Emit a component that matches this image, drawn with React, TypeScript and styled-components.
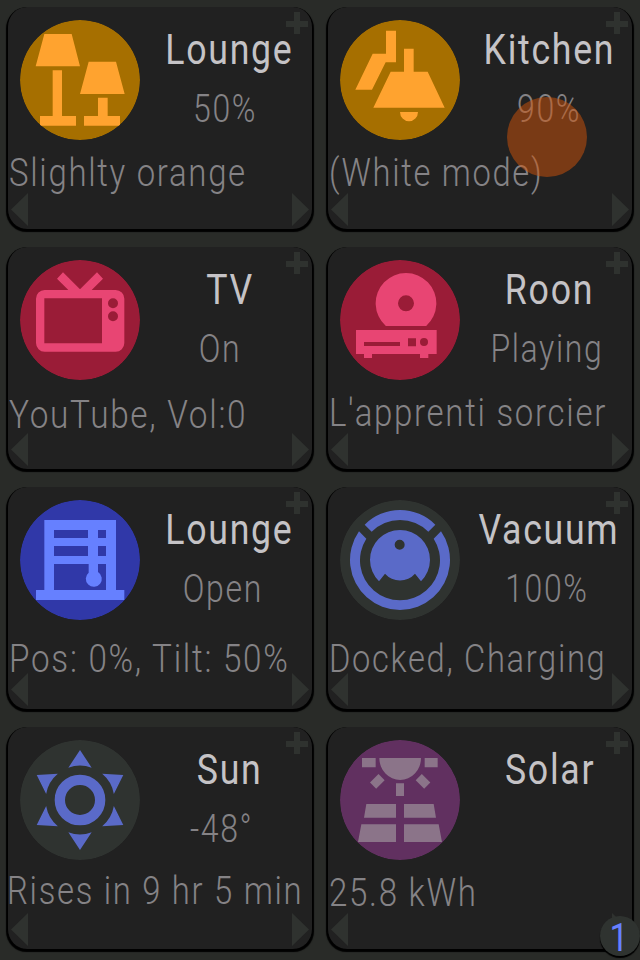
import React from "react";
import styled, { createGlobalStyle } from "styled-components";

const Global = createGlobalStyle`
  body { margin: 0; background: #292b28; overflow: hidden; }
`;

const Screen = styled.main`
  position: relative;
  width: 640px;
  height: 960px;
  display: grid;
  grid-template-columns: repeat(2, minmax(0, 1fr));
  grid-template-rows: repeat(4, minmax(0, 1fr));
  overflow: hidden;
  font-family: "Roboto", "Liberation Sans", sans-serif;
`;

const Card = styled.article`
  position: relative;
  box-sizing: border-box;
  margin: 7px 7px 11px 7px;
  padding: 13px 0 0 1px;
  border: 0 solid #000;
  border-width: 0 1px;
  border-radius: 20px;
  background: #212121;
  box-shadow: 0 2px 1px 0.5px #000;
`;

const Header = styled.div`
  display: flex;
  height: 120px;
  padding-left: 11px;
`;

const Disc = styled.svg`
  flex: none;
  width: 120px;
  height: 120px;
  border-radius: 50%;
`;

const Labels = styled.div`
  flex: none;
  width: 178px;
  display: flex;
  flex-direction: column;
  align-items: center;
`;

const Title = styled.h2<{ $shift?: number }>`
  margin: 5px 0 0;
  font-size: 42px;
  line-height: 50px;
  font-weight: 400;
  letter-spacing: 2px;
  white-space: nowrap;
  color: #c5c3c6;
  transform: translateX(${(p) => p.$shift ?? 0}px) scaleX(0.85);
`;

const Value = styled.p<{ $shift?: number }>`
  margin: 10px 0 0;
  font-size: 39px;
  line-height: 48px;
  font-weight: 300;
  letter-spacing: 2px;
  white-space: nowrap;
  color: #858386;
  transform: translateX(${(p) => p.$shift ?? 0}px) scaleX(0.82);
`;

const Detail = styled.p<{ $drop: number; $shift?: number; $stretch: number }>`
  margin: ${(p) => 9 + p.$drop}px 0 0 ${(p) => p.$shift ?? 0}px;
  font-size: 39px;
  line-height: 48px;
  font-weight: 300;
  letter-spacing: 2px;
  white-space: nowrap;
  color: #858386;
  width: 0;
  transform: scaleX(${(p) => p.$stretch});
  transform-origin: 0 0;
`;

const Marks = styled.svg`
  position: absolute;
  left: 0;
  top: 0;
  width: 304px;
  height: 221px;
  fill: #2f322f;
`;

const Touch = styled.div`
  position: absolute;
  left: 507px;
  top: 97px;
  width: 80px;
  height: 80px;
  border-radius: 50%;
  background: rgba(209, 83, 9, 0.5);
`;

const Badge = styled.div`
  position: absolute;
  left: 600px;
  top: 916px;
  width: 40px;
  height: 40px;
  border-radius: 50%;
  background: #2f3330;
  box-shadow: 0 2px 1px #000;
  color: #6680ff;
  font-size: 39px;
  font-weight: 400;
  line-height: 44px;
  text-align: center;
`;

const BadgeText = styled.span`
  display: inline-block;
  transform: translateX(-1px) scaleX(0.86);
`;

const sunRays = [0, 60, 120, 180, 240, 300];

const icons: Record<string, React.ReactNode> = {
  lamps: (
    <path d="M73,42H155L180,139H47ZM98,151H126V288H168V317H60V288H98ZM206,125H288L314,222H180ZM234,233H263V288H300V317H192V288H234Z" />
  ),
  pendant: (
    <path d="M138,32H168V127H137L96,209H46L98,101H138ZM192,86H221V155H263L314,263H100L152,155H192ZM180,276H234A27,28 0 0 1 180,276Z" />
  ),
  tv: (
    <path
      fillRule="evenodd"
      d="M129,37L111,56L145,90H74A26,26 0 0 0 48,116V249A26,26 0 0 0 74,275H287A26,26 0 0 0 313,249V116A26,26 0 0 0 287,90H215L249,56L231,37L180,88ZM73,115H246V250H73ZM264,130a15,15 0 1 0 30,0a15,15 0 1 0 -30,0ZM264,169a15,15 0 1 0 30,0a15,15 0 1 0 -30,0Z"
    />
  ),
  player: (
    <path
      fillRule="evenodd"
      d="M137.500,198A91,91 0 1 1 258.500,198ZM174,130a24,24 0 1 0 48,0a24,24 0 1 0 -48,0ZM48,210H290V282H265V294H240V282H96V294H72V282H48ZM72,246V258H180V246ZM204,235V259H228V235ZM240,246a12,12 0 1 0 24,0a12,12 0 1 0 -24,0Z"
    />
  ),
  blinds: (
    <>
      <path
        fillRule="evenodd"
        d="M73,60H288V270H313V300H48V270H73ZM102,90V114H204V90ZM234,90V114H258V90ZM102,138V168H204V138ZM234,138V168H258V138ZM102,192V270H258V192Z"
      />
      <path d="M206,190H234V216A24,24 0 1 1 206,218Z" />
    </>
  ),
  vacuum: (
    <path
      fillRule="evenodd"
      d="M74,74A150,150 0 0 1 286,74L265,95A120,120 0 0 0 95,95ZM57,94L79,116A120,120 0 1 0 281,116L303,94A150,150 0 1 1 57,94ZM117,244A90,90 0 1 1 243,244L225,221A60,60 0 0 1 135,221ZM164,134a15,15 0 1 0 30,0a15,15 0 1 0 -30,0Z"
    />
  ),
  sun: (
    <>
      <circle cx="180" cy="180" r="60.500" fill="none" stroke="currentColor" strokeWidth="31" />
      {sunRays.map((a) => (
        <path key={a} transform={`rotate(${a} 180 180)`} d="M180,30L145,83Q180,70 215,83Z" />
      ))}
    </>
  ),
  solar: (
    <>
      <path d="M118,54H243A62.500,66 0 0 1 118,54ZM66,54H107V82H66ZM254,54H293V82H254ZM168,130H192V168H168ZM79,192H168V233H72ZM192,192H281L288,233H192ZM64,253H168V306H54ZM192,253H296L306,306H192Z" />
      <rect x="94" y="111" width="36" height="26" transform="rotate(-45 112 124)" />
      <rect x="231" y="111" width="36" height="26" transform="rotate(45 249 124)" />
    </>
  ),
};

type Tile = {
  icon: string;
  bg: string;
  fg: string;
  title: string;
  titleShift?: number;
  value?: string;
  valueShift?: number;
  detail: string;
  drop: number;
  detailShift?: number;
  stretch: number;
};

const tiles: Tile[] = [
  { icon: "lamps", bg: "#a66f00", fg: "#ffa32f", title: "Lounge", value: "50%", valueShift: -4, detail: "Slighlty orange", drop: 0, stretch: 0.845 },
  { icon: "pendant", bg: "#a66f00", fg: "#ffa32f", title: "Kitchen", value: "90%", detail: "(White mode)", drop: 0, stretch: 0.84 },
  { icon: "tv", bg: "#9a1c37", fg: "#e84573", title: "TV", titleShift: 1, value: "On", valueShift: -9, detail: "YouTube, Vol:0", drop: 2, stretch: 0.855 },
  { icon: "player", bg: "#9a1c37", fg: "#e84573", title: "Roon", value: "Playing", valueShift: -2, detail: "L'apprenti sorcier", drop: 0, stretch: 0.847 },
  { icon: "blinds", bg: "#3038a8", fg: "#6680ff", title: "Lounge", value: "Open", valueShift: -6, detail: "Pos: 0%, Tilt: 50%", drop: 6, stretch: 0.853 },
  { icon: "vacuum", bg: "#2f3330", fg: "#5a6ac8", title: "Vacuum", value: "100%", valueShift: -2, detail: "Docked, Charging", drop: 6, stretch: 0.838 },
  { icon: "sun", bg: "#2f3330", fg: "#5a6ac8", title: "Sun", titleShift: 1, value: "-48°", valueShift: -7, detail: "Rises in 9 hr 5 min", drop: -2, detailShift: -2, stretch: 0.843 },
  { icon: "solar", bg: "#613060", fg: "#8b7489", title: "Solar", titleShift: 1, detail: "25.8 kWh", drop: 0, stretch: 0.848 },
];

export default function App() {
  return (
    <>
      <Global />
      <Screen>
        {tiles.map((t) => (
          <Card key={t.icon}>
            <Marks viewBox="8 7 304 221">
              <path d="M294,12H300V21H308V27H300V34H294V27H286V21H294ZM28,193V226L11,209.500ZM292,193V226L309,209.500Z" />
            </Marks>
            <Header>
              <Disc viewBox="0 0 360 360" color={t.fg} fill={t.fg}>
                <circle cx="180" cy="180" r="180" fill={t.bg} />
                {icons[t.icon]}
              </Disc>
              <Labels>
                <Title $shift={t.titleShift}>{t.title}</Title>
                {t.value && <Value $shift={t.valueShift}>{t.value}</Value>}
              </Labels>
            </Header>
            <Detail $drop={t.drop} $shift={t.detailShift} $stretch={t.stretch}>
              {t.detail}
            </Detail>
          </Card>
        ))}
        <Touch />
        <Badge>
          <BadgeText>1</BadgeText>
        </Badge>
      </Screen>
    </>
  );
}
